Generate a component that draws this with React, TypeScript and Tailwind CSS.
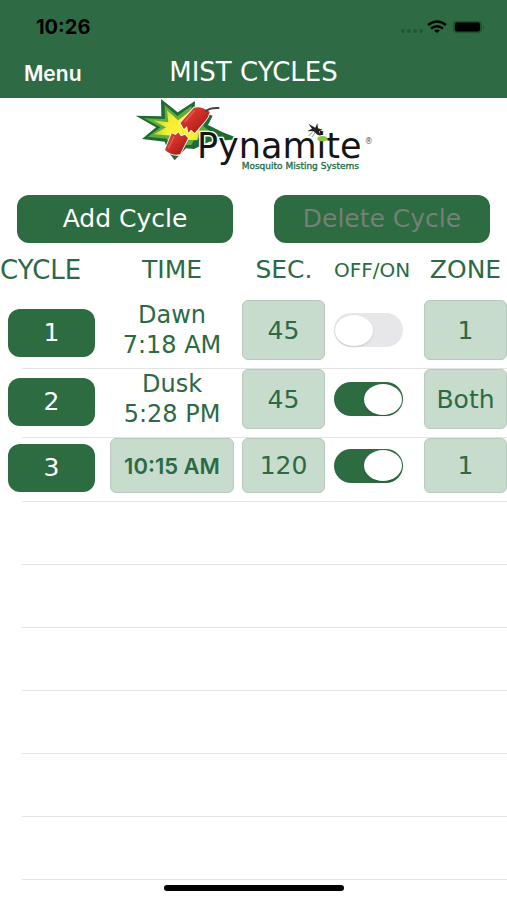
import { useState } from "react";

type Cycle = {
  id: number;
  label?: string;
  time: string;
  seconds: string;
  on: boolean;
  zone: string;
};

const initialCycles: Cycle[] = [
  { id: 1, label: "Dawn", time: "7:18 AM", seconds: "45", on: false, zone: "1" },
  { id: 2, label: "Dusk", time: "5:28 PM", seconds: "45", on: true, zone: "Both" },
  { id: 3, time: "10:15 AM", seconds: "120", on: true, zone: "1" },
];

const fieldClass =
  "block w-full rounded-md border border-[#b7cabd] bg-[#c7dccd] p-0 text-center text-[25px] text-[#2b6a45] outline-none";

function StatusBar() {
  return (
    <div className="flex h-[50px] items-center justify-between pl-9 pr-5 pt-1 text-black">
      <span className="font-['Inter',sans-serif] text-xl font-bold">10:26</span>
      <svg width="88" height="16" viewBox="0 0 88 16" aria-hidden="true">
        <g fill="#235733">
          <circle cx="4" cy="12" r="2" />
          <circle cx="10" cy="12" r="2" />
          <circle cx="16" cy="12" r="2" />
          <circle cx="22" cy="12" r="2" />
        </g>
        <g fill="none" stroke="#000" strokeWidth="2.500">
          <path d="M29 6 Q38 -1 47 6" />
          <path d="M32 9.500 Q38 5 44 9.500" />
        </g>
        <path d="M35 11.500 Q38 9.500 41 11.500 L38 14 Z" />
        <rect x="54" y="2" width="29" height="12" rx="4" fill="#20522f" />
        <rect x="56" y="3.500" width="25" height="9" rx="2" />
        <path d="M84 6.500 Q87 8.500 84 10.500 Z" fill="#20522f" />
      </svg>
    </div>
  );
}

function Logo() {
  return (
    <svg
      className="mx-auto block"
      width="255"
      height="80"
      viewBox="0 9 765 240"
      role="img"
      aria-label="Pynamite Mosquito Misting Systems"
    >
      <defs>
        <linearGradient id="stick" x1="0" y1="0" x2="1" y2="1">
          <stop offset="0" stopColor="#dd4a3c" />
          <stop offset="0.500" stopColor="#cb2c25" />
          <stop offset="1" stopColor="#8e1712" />
        </linearGradient>
        <radialGradient id="burst" gradientUnits="userSpaceOnUse" cx="165" cy="104" r="85">
          <stop offset="0" stopColor="#fff22e" />
          <stop offset="0.500" stopColor="#f4ee38" />
          <stop offset="1" stopColor="#b4d83a" />
        </radialGradient>
      </defs>
      <path
        d="M105 12 L155 52 L207 18 L206 45 L260 62 L246 90 L290 112 L342 132 L250 140 L204 162 L180 160 L146 196 L128 172 L116 140 L48 132 L90 97 L29 62 L106 64 Z"
        fill="#1f6b34"
      />
      <path
        d="M116 30 L154 63 L196 33 L198 62 L240 72 L232 94 L268 122 L206 132 L196 150 L174 150 L146 182 L132 150 L122 131 L66 125 L104 97 L54 70 L117 72 Z"
        fill="#62ab3e"
      />
      <path
        d="M123 46 L156 76 L190 50 L192 76 L222 96 L214 136 L182 134 L166 142 L140 122 L84 118 L120 97 L80 76 L127 82 Z"
        fill="url(#burst)"
      />
      <g stroke="#fff" strokeWidth="5" strokeLinejoin="round" fill="url(#stick)" paintOrder="stroke">
        <path d="M204 38 Q228 33 251 51 Q248 66 238 77 L206 114 L195 104 L187 113 L183 94 L174 102 L163 84 Z" />
        <path d="M137 115 L149 120 L157 112 L165 124 L177 119 L186 130 L162 178 Q138 184 117 165 Z" />
      </g>
      <path d="M206 46 L177 80" stroke="#e05a4c" strokeWidth="5" />
      <path d="M144 124 L127 160" stroke="#e05a4c" strokeWidth="5" />
      <path d="M238 50 Q250 37 280 39" fill="none" stroke="#444" strokeWidth="6" />
      <g fontFamily="'DejaVu Sans', sans-serif">
        <text x="213" y="188" fontSize="105" fill="#151515" stroke="#fff" strokeWidth="8" paintOrder="stroke">
          Pynamite
        </text>
        <text x="347" y="221" fontSize="27" fill="#256f4a" stroke="#256f4a" strokeWidth="1">
          Mosquito Misting Systems
        </text>
        <text x="716" y="146" fontSize="24" fill="#555">
          ®
        </text>
      </g>
      <ellipse cx="589" cy="131" rx="15" ry="8" fill="#8cc63f" />
      <path
        d="M574 119 L562 108 L543 109 L558 101 L547 86 L568 98 L574 84 L576 100 L590 104 L579 109 L584 122 Z"
        fill="#222"
      />
      <path d="M562 108 L548 123 M568 112 L558 126" stroke="#555" strokeWidth="2" />
    </svg>
  );
}

export default function App() {
  const [cycles, setCycles] = useState(initialCycles);
  const update = (id: number, change: Partial<Cycle>) =>
    setCycles((list) => list.map((c) => (c.id === id ? { ...c, ...change } : c)));

  return (
    <div className="relative min-h-screen overflow-hidden bg-white font-['DejaVu_Sans',sans-serif] text-[#2b6a45]">
      <header className="bg-[#2e6b44] text-white">
        <StatusBar />
        <div className="grid h-12 grid-cols-[1fr_auto_1fr] items-center px-6">
          <button type="button" className="justify-self-start font-['Inter',sans-serif] text-[21px] font-semibold">
            Menu
          </button>
          <h1 className="pb-1 text-[26px] leading-8">MIST CYCLES</h1>
        </div>
      </header>

      <main>
        <Logo />
        <div className="mt-[17px] grid grid-cols-2 gap-[41px] px-[17px]">
          <button type="button" className="h-12 rounded-xl bg-[#2d6b40] text-[25px] text-white">
            Add Cycle
          </button>
          <button type="button" disabled className="h-12 rounded-xl bg-[#2d6b40] text-[25px] text-[#748078]">
            Delete Cycle
          </button>
        </div>

        <table className="w-full table-fixed border-separate border-spacing-0">
          <colgroup>
            <col className="w-[102px]" />
            <col className="w-[140px]" />
            <col className="w-[92px]" />
            <col className="w-[90px]" />
            <col className="w-[83px]" />
          </colgroup>
          <thead>
            <tr className="h-[57px] text-[25px] leading-8 *:p-0 *:pb-1 *:font-normal">
              <th scope="col" className="text-left text-[26px] leading-8">CYCLE</th>
              <th scope="col">TIME</th>
              <th scope="col">
                <span className="block pr-2">SEC.</span>
              </th>
              <th scope="col" className="text-left text-xl leading-8">OFF/ON</th>
              <th scope="col">ZONE</th>
            </tr>
          </thead>
          <tbody>
            {cycles.map((c) => (
              <tr key={c.id} className={c.label ? "h-[69px]" : "h-16"}>
                <td className="relative p-0 pb-1 pl-2 pr-[7px] after:absolute after:bottom-0 after:left-[22px] after:right-0 after:h-px after:bg-[#e4e4e4]">
                  <button type="button" className="block h-12 w-full rounded-xl bg-[#2d6b40] text-[25px] text-white">
                    {c.id}
                  </button>
                </td>
                <td className="border-b border-[#e4e4e4] p-0 px-2 pb-2 text-center text-2xl leading-[30px]">
                  {c.label ? (
                    <>
                      <div>{c.label}</div>
                      <div>{c.time}</div>
                    </>
                  ) : (
                    <button
                      type="button"
                      className="block h-[55px] w-full rounded-md border border-[#b7cabd] bg-[#c7dccd] font-['Inter',sans-serif] text-[22px] font-semibold"
                    >
                      {c.time}
                    </button>
                  )}
                </td>
                <td className="border-b border-[#e4e4e4] p-0 pb-2 pr-[9px]">
                  <input
                    aria-label={`Seconds for cycle ${c.id}`}
                    value={c.seconds}
                    onChange={(e) => update(c.id, { seconds: e.target.value })}
                    className={`${fieldClass} ${c.label ? "h-[60px]" : "h-[55px]"}`}
                  />
                </td>
                <td className="border-b border-[#e4e4e4] p-0 pb-2">
                  <input
                    type="checkbox"
                    role="switch"
                    aria-label={`Cycle ${c.id} on`}
                    checked={c.on}
                    onChange={(e) => update(c.id, { on: e.target.checked })}
                    className="flex h-[34px] w-[69px] appearance-none items-center rounded-full bg-[#e7e7e9] px-px before:h-[31px] before:w-[38px] before:rounded-[50%] before:bg-white before:shadow-sm checked:justify-end checked:bg-[#2d6b40]"
                  />
                </td>
                <td className="border-b border-[#e4e4e4] p-0 pb-2">
                  <input
                    aria-label={`Zone for cycle ${c.id}`}
                    value={c.zone}
                    onChange={(e) => update(c.id, { zone: e.target.value })}
                    className={`${fieldClass} ${c.label ? "h-[60px]" : "h-[55px]"}`}
                  />
                </td>
              </tr>
            ))}
          </tbody>
        </table>

        <div className="ml-[22px]" aria-hidden="true">
          {[4, 5, 6, 7, 8, 9].map((row) => (
            <div key={row} className="h-[63px] border-b border-[#e4e4e4]" />
          ))}
        </div>
      </main>

      <div className="absolute bottom-[9px] left-1/2 h-1.5 w-[180px] -translate-x-1/2 rounded-full bg-black" />
    </div>
  );
}
